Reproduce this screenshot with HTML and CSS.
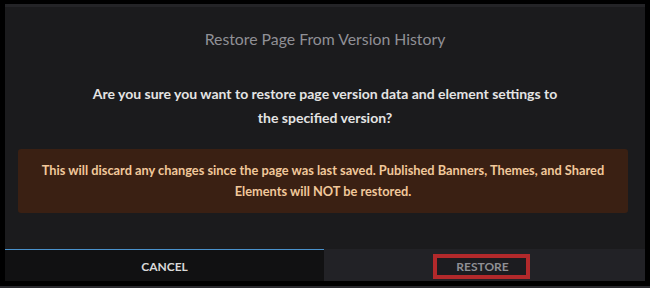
FILE: index.html
```html
<!DOCTYPE html>
<html>
<head>
<meta charset="utf-8">
<link rel="stylesheet" href="styles.css">
</head>
<body>
<div class="dialog">
  <div class="title">Restore Page From Version History</div>
  <div class="question">Are you sure you want to restore page version data and element settings to<br>the specified version?</div>
  <div class="warning">This will discard any changes since the page was last saved. Published Banners, Themes, and Shared<br>Elements will NOT be restored.</div>
  <div class="footer">
    <div class="btn cancel">CANCEL</div>
    <div class="btn restore"><span class="restore-label">RESTORE</span></div>
  </div>
</div>
<div class="strip"></div>
</body>
</html>
```
FILE: styles.css
```css
html, body {
  margin: 0;
  padding: 0;
  background: #000;
  width: 650px;
  height: 288px;
  overflow: hidden;
  font-family: Lato, "Open Sans", sans-serif;
}
.dialog {
  margin: 4px 0 0 5px;
  width: 640px;
  height: 274px;
  border-top: 3px solid #242427;
  background: #1b1b1d;
  display: flex;
  flex-direction: column;
}
.title {
  margin-top: 22px;
  text-align: center;
  font-size: 15.8px;
  line-height: 20px;
  color: #909096;
}
.question {
  margin-top: 33px;
  text-align: center;
  font-size: 14px;
  font-weight: 700;
  line-height: 24px;
  color: #e4e4e4;
}
.warning {
  margin: 19px 17px 0 13px;
  padding: 11px 0;
  background: #3a2013;
  border-radius: 3px;
  text-align: center;
  font-size: 12.8px;
  font-weight: 700;
  line-height: 21px;
  color: #f1c89b;
}
.footer {
  margin-top: 36px;
  display: flex;
  height: 32px;
}
.btn {
  display: flex;
  align-items: center;
  justify-content: center;
  font-size: 12px;
  font-weight: 700;
  box-sizing: border-box;
}
.cancel {
  width: 319px;
  background: #111112;
  border-top: 1px solid #4a92cc;
  color: #d9d9d9;
  padding-top: 1px;
}
.restore {
  flex: 1;
  background: #222226;
  padding-right: 7px;
}
.restore-label {
  display: inline-block;
  width: 97px;
  height: 25px;
  box-sizing: border-box;
  border: 4px solid #b2292b;
  background: #1c1c20;
  color: #8f8f94;
  text-align: center;
  line-height: 18px;
  padding-left: 3px;
  margin-top: 3px;
}
.strip {
  margin-top: 5px;
  height: 2px;
  background: #2a2a2e;
}
```
